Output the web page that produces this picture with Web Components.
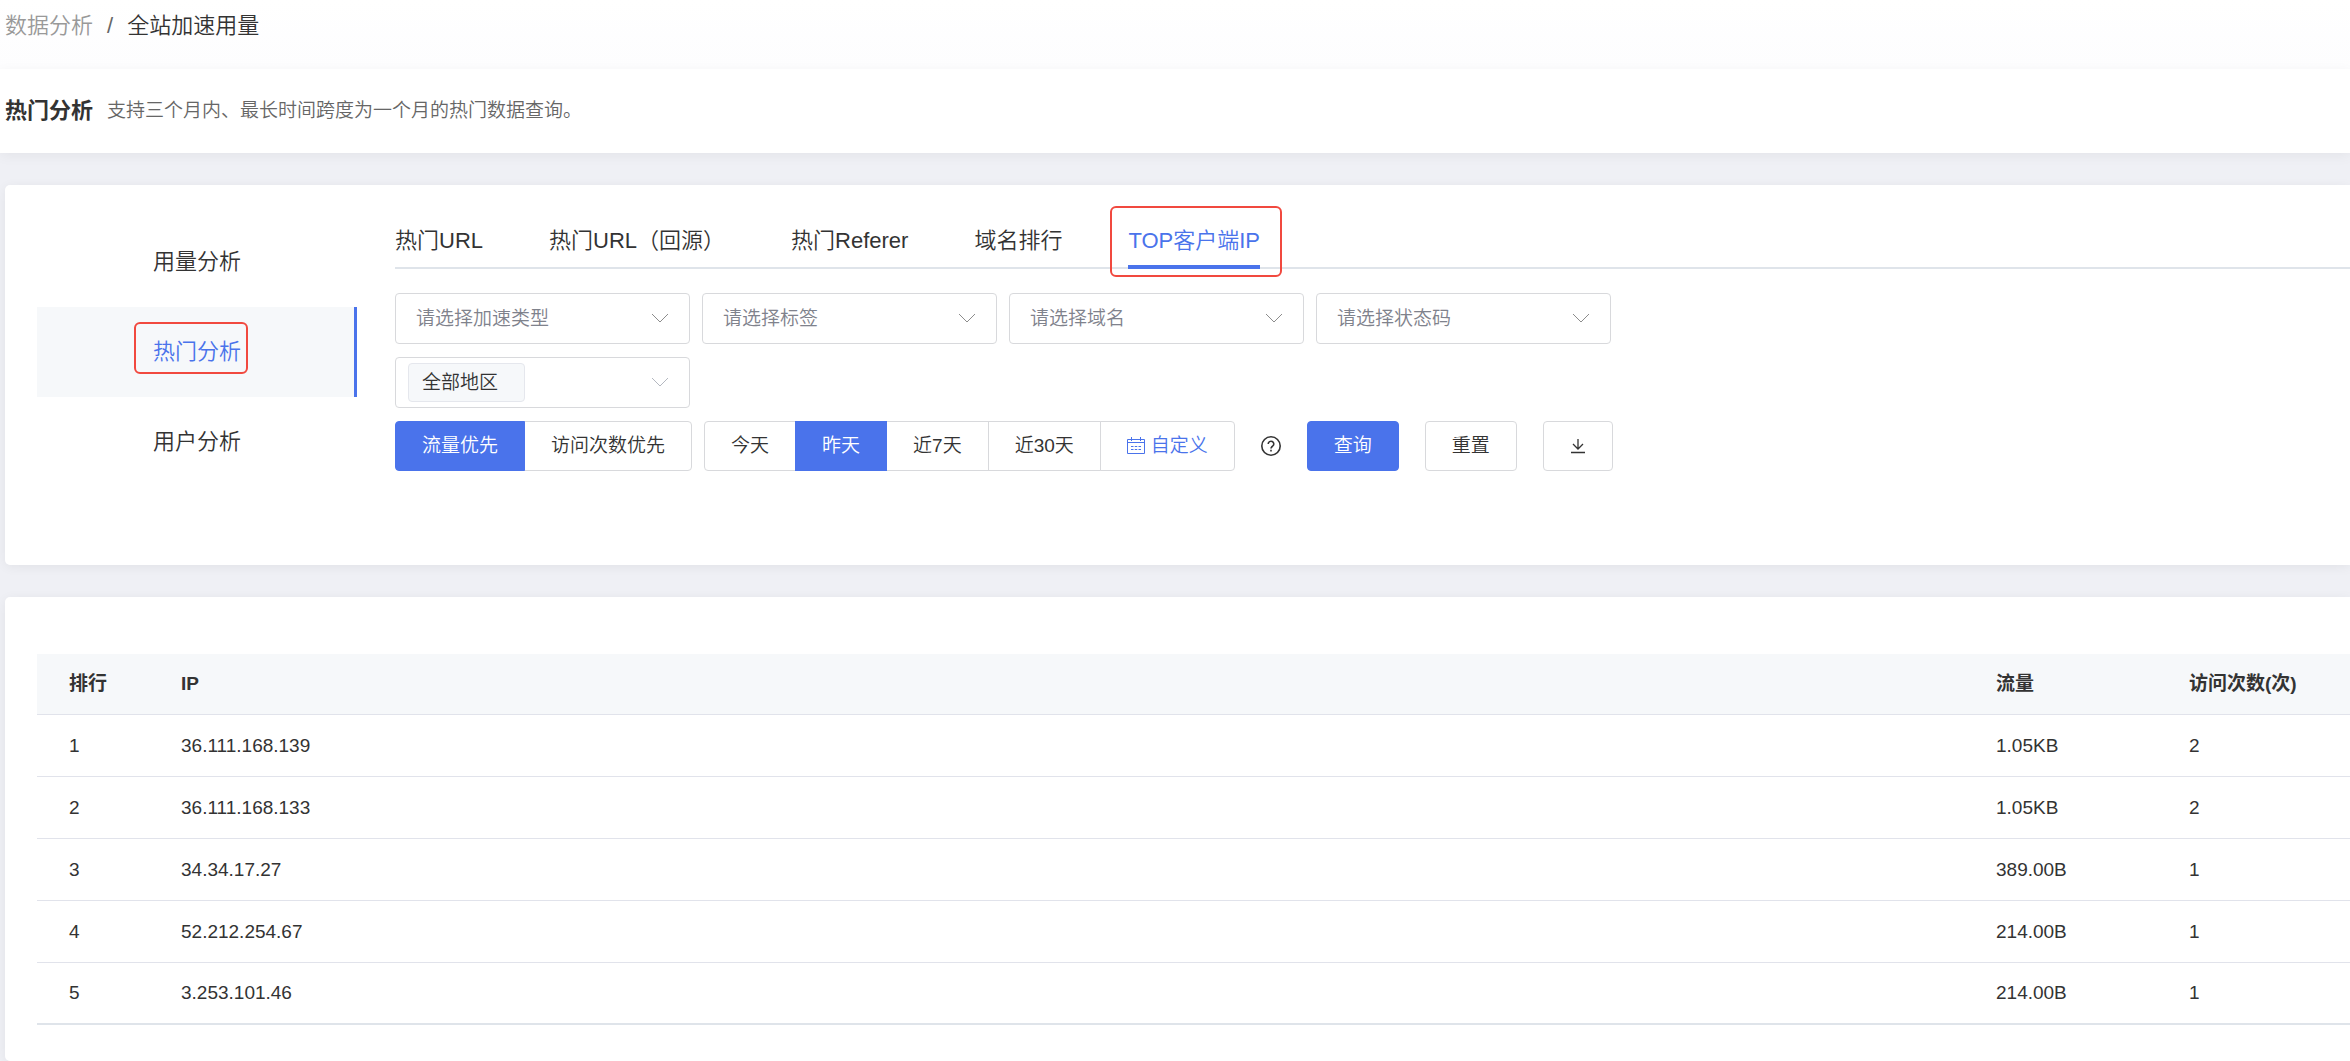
<!DOCTYPE html>
<html lang="zh-CN">
<head>
<meta charset="utf-8">
<meta name="viewport" content="width=device-width, initial-scale=1">
<title>全站加速用量</title>
<style>
html,body{margin:0;padding:0}
body{
	--primary:#4a73eb;
	--text:#333;
	--text-sub:#666;
	--text-mute:#999;
	--line:#dfe4ea;
	--control-line:#d8d9dc;
	--fill:#f6f8fa;
	--mark:#f1493f;
	--size-l:22px;
	font:350 19px/28px "Liberation Sans","Noto Sans CJK SC",sans-serif;
	color:var(--text);
	background:#eff0f5;
}
</style>
</head>
<body>
<usage-page>
	<usage-crumb slot="top" parent="数据分析" current="全站加速用量"></usage-crumb>
	<usage-heading slot="top" label="热门分析">支持三个月内、最长时间跨度为一个月的热门数据查询。</usage-heading>
	<usage-card>
		<usage-split>
			<side-menu slot="side" items="用量分析,热门分析,用户分析" active="1"></side-menu>
			<tab-bar items="热门URL,热门URL（回源）,热门Referer,域名排行,TOP客户端IP" active="4"></tab-bar>
			<filter-panel></filter-panel>
		</usage-split>
	</usage-card>
	<usage-card grow>
		<rank-table></rank-table>
	</usage-card>
</usage-page>

<script>
(function() {
	const base = `
		*,:host{box-sizing:border-box}
		button,input,select{margin:0;font:inherit;color:inherit}
		a{color:inherit;text-decoration:none}
		ul{list-style:none;margin:0;padding:0}
		svg{display:block;fill:none;stroke:currentColor}
	`;

	//frame drawn around an item, over whatever lies beside it
	const frame = `
		.mark{position:relative}
		.mark::after{content:'';position:absolute;inset:var(--mark-inset);border:2px solid var(--mark);border-radius:6px;pointer-events:none}
	`;

	const icons = {
		arrow: '<svg width="18" height="18" viewBox="0 0 18 18" aria-hidden="true"><path d="M1 4l8 8 8-8"/></svg>',
		calendar: '<svg width="18" height="18" viewBox="0 0 18 18" aria-hidden="true"><path d="M.5 2.5h17v14H.5zM.5 5.5h17M4.5 0v4M13.5 0v4"/><path d="M4 9.5h10M4 12.5h10" stroke-dasharray="2.5 1.25"/></svg>',
		help: '<svg width="20" height="20" viewBox="0 0 20 20" stroke-width="1.6" aria-hidden="true"><circle cx="10" cy="10" r="9.2"/><path d="M7.2 8a2.8 2.7 0 1 1 4.4 2.2c-1 .7-1.6 1.1-1.6 2.2"/><path d="M10 13.7v1.7"/></svg>',
		download: '<svg width="16" height="16" viewBox="0 0 16 16" stroke-width="1.3" aria-hidden="true"><path d="M8 1v10M3 6l5 5 5-5M1 14.5h14"/></svg>'
	};

	class UsageElement extends HTMLElement {
		constructor() {
			super();

			const template = document.createElement('template');
			template.innerHTML = `<style>${base}</style>${this.render()}`;
			this.attachShadow({mode: 'open'});
			this.shadowRoot.appendChild(template.content.cloneNode(true));
		}

		list(name) {
			return (this.getAttribute(name) || '').split(',');
		}

		render() {
			return '<slot></slot>';
		}
	}

	class UsagePage extends UsageElement {
		render() {
			return `
				<style>
				:host{display:flex;flex-direction:column;min-height:100vh;overflow:hidden}
				main{flex:1;display:flex;flex-direction:column;gap:32px;padding:32px 0 0 5px}
				</style>
				<slot name="top"></slot>
				<main><slot></slot></main>
			`;
		}
	}

	class UsageCrumb extends UsageElement {
		render() {
			return `
				<style>
				:host{display:block;height:69px;padding:10px 5px;background:linear-gradient(#fff,#fdfdfe)}
				nav{display:flex;gap:14px;font-size:var(--size-l);line-height:32px}
				a{color:var(--text-mute)}
				i{font-style:normal;color:var(--text-sub)}
				</style>
				<nav aria-label="breadcrumb">
					<a href="#">${this.getAttribute('parent')}</a>
					<i>/</i>
					<span>${this.getAttribute('current')}</span>
				</nav>
			`;
		}
	}

	class UsageHeading extends UsageElement {
		render() {
			return `
				<style>
				:host{display:flex;align-items:center;gap:14px;height:84px;padding:0 5px;background:#fff;box-shadow:0 3px 12px rgba(0,0,0,.05)}
				h1{margin:0;font-size:var(--size-l);font-weight:700}
				p{margin:0;color:var(--text-sub)}
				</style>
				<h1>${this.getAttribute('label')}</h1>
				<p><slot></slot></p>
			`;
		}
	}

	class UsageCard extends UsageElement {
		render() {
			return `
				<style>
				:host{display:block;padding:32px 0 32px 32px;border-radius:5px 0 0 5px;background:#fff;box-shadow:0 2px 12px rgba(0,0,0,.06)}
				:host([grow]){flex:1;padding-top:57px}
				</style>
				<slot></slot>
			`;
		}
	}

	class UsageSplit extends UsageElement {
		render() {
			return `
				<style>
				:host{display:grid;grid-template-columns:320px 1fr;gap:38px}
				section{min-width:0;padding-bottom:62px}
				</style>
				<slot name="side"></slot>
				<section><slot></slot></section>
			`;
		}
	}

	class SideMenu extends UsageElement {
		render() {
			const active = Number(this.getAttribute('active'));

			return `
				<style>
				${frame}
				:host{display:block;font-size:var(--size-l);line-height:30px}
				a{display:flex;align-items:center;justify-content:center;height:90px}
				a[aria-current]{color:var(--primary);background:var(--fill);box-shadow:inset -3px 0 var(--primary)}
				.mark{--mark-inset:-15px -7px -7px -19px}
				</style>
				<nav><ul>
					${this.list('items').map((item, idx) => idx === active
						? `<li><a href="#" aria-current="page"><span class="mark">${item}</span></a></li>`
						: `<li><a href="#"><span>${item}</span></a></li>`).join('')}
				</ul></nav>
			`;
		}
	}

	class TabBar extends UsageElement {
		render() {
			const active = Number(this.getAttribute('active'));

			return `
				<style>
				${frame}
				:host{display:block;margin-bottom:24px;font-size:var(--size-l);line-height:48px}
				div{display:flex;gap:66px;box-shadow:inset 0 -2px var(--line)}
				button{padding:0;border:0;border-bottom:4px solid transparent;background:none;white-space:nowrap;cursor:pointer}
				button[aria-selected='true']{color:var(--primary);border-color:var(--primary)}
				.mark{--mark-inset:-11px -22px -12px -18px}
				</style>
				<div role="tablist">
					${this.list('items').map((item, idx) => `<button type="button" role="tab" aria-selected="${idx === active}" class="${idx === active ? 'mark' : ''}">${item}</button>`).join('')}
				</div>
			`;
		}
	}

	class SelectField extends UsageElement {
		render() {
			const tagged = this.hasAttribute('tagged');

			return `
				<style>
				:host{display:block;width:295px;height:51px}
				div{display:grid;align-items:center;height:100%;border:1px solid var(--control-line);border-radius:4px;background:#fff}
				div > *{grid-area:1/1}
				select{z-index:1;width:100%;height:100%;padding:0 44px 0 20px;border:0;background:none;color:#7f828c;appearance:none}
				.tag{width:117px;height:39px;margin-left:12px;border:1px solid #e5e7ed;border-radius:4px;background:var(--fill)}
				.tag ~ select{padding-left:26px;color:var(--text)}
				svg{justify-self:end;margin-right:20px;color:#8c8c8c}
				:host([tagged]) svg{color:#b4b8c0}
				</style>
				<div>
					${tagged ? '<span class="tag"></span>' : ''}
					<select aria-label="${this.getAttribute('label')}"><option>${this.getAttribute('value')}</option></select>
					${icons.arrow}
				</div>
			`;
		}
	}

	class RadioGroup extends UsageElement {
		render() {
			const name = this.getAttribute('name');
			const active = Number(this.getAttribute('active'));

			return `
				<style>
				:host{display:block}
				fieldset{display:flex;margin:0;padding:0;border:0}
				label{position:relative;display:flex;align-items:center;gap:6px;height:50px;padding:0 26px;border:1px solid var(--control-line);background:#fff;white-space:nowrap;cursor:pointer}
				label + label{margin-left:-1px}
				label:first-child{border-radius:4px 0 0 4px}
				label:last-child{border-radius:0 4px 4px 0}
				label:has(:checked){z-index:1;border-color:var(--primary);background:var(--primary);color:#fff}
				label:has(svg){color:var(--primary)}
				input{position:absolute;opacity:0;pointer-events:none}
				</style>
				<fieldset aria-label="${this.getAttribute('label')}">
					${this.list('items').map((item, idx) => `
						<label><input type="radio" name="${name}"${idx === active ? ' checked' : ''}>${item === '自定义' ? icons.calendar : ''}<span>${item}</span></label>
					`).join('')}
				</fieldset>
			`;
		}
	}

	class ActionButton extends UsageElement {
		render() {
			const icon = this.getAttribute('icon');
			const label = this.getAttribute('label');

			return `
				<style>
				:host{display:block}
				button{display:flex;align-items:center;justify-content:center;height:50px;padding:0 26px;border:1px solid var(--control-line);border-radius:4px;background:#fff;cursor:pointer}
				:host([primary]) button{border-color:var(--primary);background:var(--primary);color:#fff}
				:host([plain]) button{padding:0;border:0}
				</style>
				<button type="button"${icon ? ` aria-label="${label}"` : ''}>${icon ? icons[icon] : label}</button>
			`;
		}
	}

	class FilterPanel extends UsageElement {
		render() {
			return `
				<style>
				:host{display:flex;flex-direction:column;gap:13px}
				.row{display:flex;flex-wrap:wrap;align-items:center;gap:12px}
				.actions{display:flex;align-items:center;gap:26px;margin-left:14px}
				</style>
				<div class="row">
					<select-field label="加速类型" value="请选择加速类型"></select-field>
					<select-field label="标签" value="请选择标签"></select-field>
					<select-field label="域名" value="请选择域名"></select-field>
					<select-field label="状态码" value="请选择状态码"></select-field>
				</div>
				<div class="row">
					<select-field tagged label="地区" value="全部地区"></select-field>
				</div>
				<div class="row">
					<radio-group name="order" label="排序" items="流量优先,访问次数优先" active="0"></radio-group>
					<radio-group name="range" label="时间" items="今天,昨天,近7天,近30天,自定义" active="1"></radio-group>
					<div class="actions">
						<action-button plain icon="help" label="帮助"></action-button>
						<action-button primary label="查询"></action-button>
						<action-button label="重置"></action-button>
						<action-button icon="download" label="下载"></action-button>
					</div>
				</div>
			`;
		}
	}

	const rows = [
		['1', '36.111.168.139', '1.05KB', '2'],
		['2', '36.111.168.133', '1.05KB', '2'],
		['3', '34.34.17.27', '389.00B', '1'],
		['4', '52.212.254.67', '214.00B', '1'],
		['5', '3.253.101.46', '214.00B', '1']
	];

	class RankTable extends UsageElement {
		render() {
			return `
				<style>
				:host{display:block}
				table{width:100%;table-layout:fixed;border-spacing:0}
				th,td{height:62px;padding:0 0 0 32px;border-bottom:1px solid #e1e3eb;text-align:left}
				th{height:61px;background:var(--fill);font-weight:700}
				tbody tr:last-child td{border-bottom:2px solid var(--line)}
				.rank{width:112px}
				.num{width:193px}
				</style>
				<table>
					<colgroup><col class="rank"><col><col class="num"><col class="num"></colgroup>
					<thead><tr>${['排行', 'IP', '流量', '访问次数(次)'].map((text) => `<th scope="col">${text}</th>`).join('')}</tr></thead>
					<tbody>${rows.map((row) => `<tr>${row.map((text) => `<td>${text}</td>`).join('')}</tr>`).join('')}</tbody>
				</table>
			`;
		}
	}

	//customElements define
	customElements.define('usage-page', UsagePage);
	customElements.define('usage-crumb', UsageCrumb);
	customElements.define('usage-heading', UsageHeading);
	customElements.define('usage-card', UsageCard);
	customElements.define('usage-split', UsageSplit);
	customElements.define('side-menu', SideMenu);
	customElements.define('tab-bar', TabBar);
	customElements.define('select-field', SelectField);
	customElements.define('radio-group', RadioGroup);
	customElements.define('action-button', ActionButton);
	customElements.define('filter-panel', FilterPanel);
	customElements.define('rank-table', RankTable);
})();
</script>
</body>
</html>
